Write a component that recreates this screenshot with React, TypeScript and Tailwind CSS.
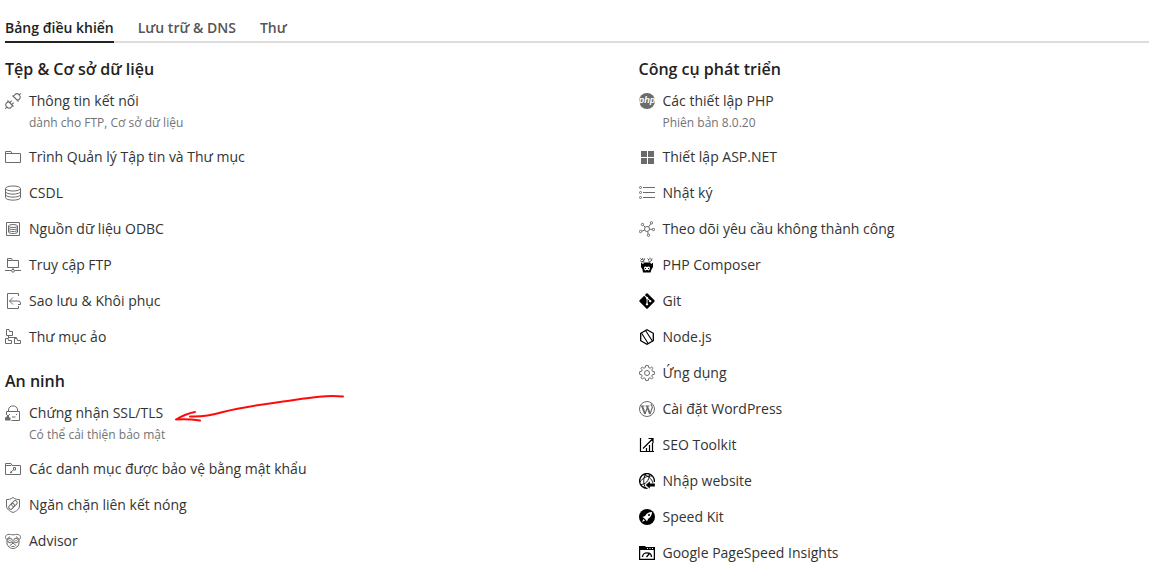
import type { ReactNode } from 'react';
import { FaGitAlt } from 'react-icons/fa';

function Svg({ children, dark = false }: { children: ReactNode; dark?: boolean }) {
  return (
    <svg
      viewBox="0 0 16 16"
      aria-hidden="true"
      fill="none"
      stroke="currentColor"
      strokeWidth="1"
      className={dark ? 'size-4 text-black' : 'size-4 text-[#6b6b6b]'}
    >
      {children}
    </svg>
  );
}

const icons = {
  plug: (
    <Svg>
      <g strokeWidth="1.1">
        <path d="M7.500 2.500 13.500 8.500M8.500 3.500 10 1.500Q12-.3 14 1.800Q16.300 4 14.500 6L12.500 7.500M14.200 1.800 15.700.3" />
        <path d="M2.500 7.500 8.500 13.500M3.500 8.500 1.500 10Q-.3 12 1.800 14Q4 16.300 6 14.500L7.500 12.500M1.800 14.200.3 15.700" />
        <path d="M4.700 9.700 6.700 7.700M6.700 11.700 8.700 9.700" />
      </g>
    </Svg>
  ),
  folder: (
    <Svg>
      <path d="M.5 2.500H6L7 4.500H15.500V13.500H.5ZM.5 4.500H7" />
    </Svg>
  ),
  database: (
    <Svg>
      <ellipse cx="8" cy="3.500" rx="7.500" ry="2.500" />
      <path d="M.5 3.500V12.500C.5 16 15.500 16 15.500 12.500V3.500M.5 6.500C.5 10 15.500 10 15.500 6.500M.5 9.500C.5 13 15.500 13 15.500 9.500" />
    </Svg>
  ),
  odbc: (
    <Svg>
      <path d="M1.500 1.500H14.500V14.500H1.500Z" />
      <ellipse cx="8" cy="5" rx="4.500" ry="1.500" />
      <path d="M3.500 5V11C3.500 13 12.500 13 12.500 11V5M3.500 7C3.500 9 12.500 9 12.500 7M3.500 9C3.500 11 12.500 11 12.500 9" />
    </Svg>
  ),
  ftp: (
    <Svg>
      <path d="M2.500 1.500H6.500L7.500 3.500H13.500V10.500H2.500ZM2.500 3.500H7M8 10.500V13M0 13.500H6.500M9.500 13.500H16" />
      <circle cx="8" cy="13.800" r="1.400" />
    </Svg>
  ),
  backup: (
    <Svg>
      <path d="M13.500 3V.5H2.500V15.500H13.500V13M8 4.500 4.500 8 8 11.500M4.500 8H13Q15.500 8 15.500 10V11.500H13" />
    </Svg>
  ),
  virtual: (
    <Svg>
      <path d="M1.500.5H4L4.500 2.500H7.500V6.500H1.500ZM.5 9.500H3L3.500 11.500H6.500V14.500H.5ZM9.500 9.500H12L12.500 11.500H15.500V14.500H9.500ZM3.500 7V9.500M3.500 8.500H11.500V9.500" />
    </Svg>
  ),
  ssl: (
    <Svg>
      <path d="M3.500 7V5C3.500-.5 12.500-.5 12.500 5V7M1.500 10V6.500H14.500V15.500H6.500M4.500 9V10M11.500 9V10M7 12H10.500" />
      <path d="M0 13.500Q0 11.500 2 11.500V10H4V12L5.500 13V15.500H0Z" fill="currentColor" stroke="none" />
    </Svg>
  ),
  keyFolder: (
    <Svg>
      <path d="M.5 2.500H6L7 4.500H15.500V13.500H.5ZM.5 4.500H6" />
      <path d="M8.500 6.500H10.500V9H8.500ZM8.500 8.700 5 12M5.500 10.800 7 12" />
    </Svg>
  ),
  shield: (
    <Svg>
      <path d="M8 .5C5.500 2.500 3.500 2.500 1.500 2.500V9C1.500 12 4.500 14.200 8 15.500C11.500 14.200 14.500 12 14.500 9V2.500C12.500 2.500 10.500 2.500 8 .5Z" />
      <rect x="-3.200" y="-2" width="6.400" height="4" rx="2" transform="translate(6.600 9.300) rotate(-45)" />
      <rect x="-3.200" y="-2" width="6.400" height="4" rx="2" transform="translate(9.400 6.500) rotate(-45)" />
    </Svg>
  ),
  advisor: (
    <Svg>
      <path d="M1.500 6.500C-.3 4.500.5 1.800 3 1.500C5 1 5.500 1.800 8 1.800S11 1 13 1.500C15.500 1.800 16.300 4.500 14.500 6.500M1.500 6.500 5 3.500M14.500 6.500 11 3.500M2 6.500V10C2 13 5 15.500 8 15.500S14 13 14 10V6.500M4.500 13 8 10 11.500 13M6.500 13.500H9.500" />
      <circle cx="5" cy="7.500" r="2.300" />
      <circle cx="11" cy="7.500" r="2.300" />
      <path d="M4.500 7.500H5.500M10.500 7.500H11.500M7 10H9" strokeWidth="1.300" />
    </Svg>
  ),
  php: (
    <Svg>
      <circle cx="8" cy="8" r="8" fill="currentColor" stroke="none" />
      <text
        x="8"
        y="10"
        textAnchor="middle"
        fill="white"
        stroke="none"
        className="font-['Liberation_Sans'] text-[9px] font-bold italic"
      >
        php
      </text>
    </Svg>
  ),
  windows: (
    <Svg>
      <path d="M2 2H8V8H2ZM9 2H15V8H9ZM2 9H8V15H2ZM9 9H15V15H9Z" fill="currentColor" stroke="none" />
    </Svg>
  ),
  list: (
    <Svg>
      <path d="M4 2.500H16M4 7.500H16M4 12.500H16" />
      <circle cx="1.500" cy="2.500" r="1" />
      <circle cx="1.500" cy="7.500" r="1" />
      <circle cx="1.500" cy="12.500" r="1" />
    </Svg>
  ),
  trace: (
    <Svg>
      <circle cx="8" cy="8" r="2.500" />
      <circle cx="12.500" cy="1.800" r="1.200" />
      <circle cx="3.500" cy="3.500" r="1.200" />
      <circle cx="1.500" cy="10.500" r="1.200" />
      <circle cx="14.500" cy="8.500" r="1.200" />
      <circle cx="9.500" cy="14.200" r="1.200" />
      <path d="M9.500 6 11.800 2.800M4.400 4.400 6.200 6.200M5.700 9 2.700 10.200M10.500 8.200 13.300 8.400M8.600 10.500 9.200 13" />
    </Svg>
  ),
  composer: (
    <Svg dark>
      <path
        d="M2 5.500 4 7 5.500 5.500H11L12.500 7 14 5.500V10L12.500 12.500 11.500 15.500H4L3.500 12.500 2 10Z"
        fill="currentColor"
        stroke="none"
      />
      <path d="M5 10.500Q6 9 8 10Q10 9 11 10.500L10.500 13 8 14 5.500 13Z" fill="white" stroke="none" />
      <path d="M6 11.500H7M9 11.500H10M7 13.500H9" />
      <path d="M1.500 1.500 3 3M3.500 1 4 3M5.500 1.500 5 3.500 2.500 5 1.500 3.500M8.500 1.500 10 3M11 .7V2.500M13 1.500 12.500 3.500 10.500 5 9.500 3.500M3.500 5H5.500" strokeWidth=".7" />
    </Svg>
  ),
  git: <FaGitAlt aria-hidden="true" className="size-4 scale-110 text-black" />,
  node: (
    <Svg dark>
      <path d="M8 .7 14.300 4.300V11.700L8 15.300 1.700 11.700V4.300Z" strokeWidth="1.300" />
      <path d="M2.500 4 9.300 14.700M6.500 1.500 13.500 12.300" strokeWidth="1.100" />
    </Svg>
  ),
  gear: (
    <Svg>
      <path d="M6.700.6H9.300L9.700 2.600 11.100 3.200 12.700 2 14 3.300 12.800 4.900 13.400 6.300 15.400 6.700V9.300L13.400 9.700 12.800 11.100 14 12.700 12.700 14 11.100 12.800 9.700 13.400 9.300 15.400H6.700L6.300 13.400 4.900 12.800 3.300 14 2 12.700 3.200 11.100 2.600 9.700.6 9.300V6.700L2.600 6.300 3.200 4.900 2 3.300 3.300 2 4.900 3.200 6.300 2.600Z" strokeLinejoin="round" />
      <circle cx="8" cy="8" r="2.500" />
    </Svg>
  ),
  wordpress: (
    <Svg>
      <circle cx="8" cy="8" r="7.500" />
      <path d="M1.700 5H5.500M6.500 5H10.500" />
      <path d="M3 5 6 13M8 5 11 13" strokeWidth="1.900" />
      <path d="M6 13 8.300 6.800M11 13 13.300 6.500Q13.500 5.500 12.500 4.500Q11.500 3 13 2.800" strokeWidth="1.100" />
    </Svg>
  ),
  seo: (
    <Svg dark>
      <path d="M1.500 1V14.500H15M4 11.500 13.500 2M9.500 1.500H14V6M7.500 11V14M10.500 8V14M13.500 6V14" strokeWidth="1.200" />
    </Svg>
  ),
  importSite: (
    <Svg dark>
      <path d="M15.300 9A7.400 7.400 0 1 0 8.500 15.300" strokeWidth="1.300" />
      <path d="M4.500 1.800C9 2.500 12.500 5.500 14 10M1 9C4 4.500 8 2.800 13 3M7 .8C4 5 4 10 6.500 15M1.500 11.500C6.500 11.500 10 8 10.500 1.500" strokeWidth=".9" />
      <path d="M6.500 12 11 8V10.300H16V13.700H11V16Z" fill="currentColor" stroke="white" strokeWidth=".4" />
    </Svg>
  ),
  rocket: (
    <Svg dark>
      <circle cx="8" cy="8" r="8" fill="currentColor" stroke="none" />
      <path d="M13 3C10 3 7.500 4.500 6 7L3.500 8 5 9 7 11 8 12.500 9 10C11.500 8.500 13 6 13 3ZM4.500 10 3 13 6 11.500Z" fill="white" stroke="none" />
      <circle cx="10" cy="6" r="1" fill="currentColor" stroke="none" />
    </Svg>
  ),
  pagespeed: (
    <Svg dark>
      <path d="M0 1H6L7 2H16V5H0Z" fill="currentColor" stroke="none" />
      <path d="M.6 3V14.400H15.400V3M3.500 12C3.500 6.500 12.500 6.500 12.500 12M7.500 12 10.500 8.500" strokeWidth="1.300" />
      <path d="M8 3.500H9M10.500 3.500H11.500M13 3.500H14" stroke="white" />
    </Svg>
  ),
};

type Item = { icon: ReactNode; label: string; note?: string; mark?: boolean };

const files: Item[] = [
  { icon: icons.plug, label: 'Thông tin kết nối', note: 'dành cho FTP, Cơ sở dữ liệu' },
  { icon: icons.folder, label: 'Trình Quản lý Tập tin và Thư mục' },
  { icon: icons.database, label: 'CSDL' },
  { icon: icons.odbc, label: 'Nguồn dữ liệu ODBC' },
  { icon: icons.ftp, label: 'Truy cập FTP' },
  { icon: icons.backup, label: 'Sao lưu & Khôi phục' },
  { icon: icons.virtual, label: 'Thư mục ảo' },
];

const security: Item[] = [
  { icon: icons.ssl, label: 'Chứng nhận SSL/TLS', note: 'Có thể cải thiện bảo mật', mark: true },
  { icon: icons.keyFolder, label: 'Các danh mục được bảo vệ bằng mật khẩu' },
  { icon: icons.shield, label: 'Ngăn chặn liên kết nóng' },
  { icon: icons.advisor, label: 'Advisor' },
];

const devTools: Item[] = [
  { icon: icons.php, label: 'Các thiết lập PHP', note: 'Phiên bản 8.0.20' },
  { icon: icons.windows, label: 'Thiết lập ASP.NET' },
  { icon: icons.list, label: 'Nhật ký' },
  { icon: icons.trace, label: 'Theo dõi yêu cầu không thành công' },
  { icon: icons.composer, label: 'PHP Composer' },
  { icon: icons.git, label: 'Git' },
  { icon: icons.node, label: 'Node.js' },
  { icon: icons.gear, label: 'Ứng dụng' },
  { icon: icons.wordpress, label: 'Cài đặt WordPress' },
  { icon: icons.seo, label: 'SEO Toolkit' },
  { icon: icons.importSite, label: 'Nhập website' },
  { icon: icons.rocket, label: 'Speed Kit' },
  { icon: icons.pagespeed, label: 'Google PageSpeed Insights' },
];

function Arrow() {
  return (
    <svg
      viewBox="0 0 172 30"
      aria-hidden="true"
      fill="none"
      stroke="#ff0a0a"
      strokeWidth="2"
      strokeLinecap="round"
      strokeLinejoin="round"
      className="pointer-events-none absolute -top-2.5 left-full ml-2.5 h-[30px] w-[172px]"
    >
      <path d="M170 3.500C150 2 135 5 110 8.500C85 12 70 14 50 19C36 23 26 24 17 23.500M22 19C14 20.500 8 23.500 3 26.500C12 26 20 26.500 27 27.500" />
    </svg>
  );
}

function Section({ title, items }: { title: string; items: Item[] }) {
  return (
    <section>
      <h2 className="text-base leading-6 font-semibold text-[#222]">{title}</h2>
      <ul className="mt-2.5 flex flex-col gap-4">
        {items.map((item) => (
          <li key={item.label} className="flex items-start gap-2">
            <span className="flex h-5 w-4 shrink-0 items-center">{item.icon}</span>
            <div>
              <a href="#" className="relative block w-fit text-sm leading-5 text-[#333]">
                {item.label}
                {item.mark && <Arrow />}
              </a>
              {item.note && <p className="pt-1 text-xs leading-4 text-[#737373]">{item.note}</p>}
            </div>
          </li>
        ))}
      </ul>
    </section>
  );
}

export default function App() {
  return (
    <main className="bg-white pl-[5px] font-['Open_Sans','Noto_Sans',sans-serif]">
      <nav className="flex gap-6 border-b-2 border-[#ddd] pt-4 text-sm leading-6 font-semibold">
        <a href="#" aria-current="page" className="-mb-0.5 border-b-2 border-[#222] pb-px text-[#222]">
          Bảng điều khiển
        </a>
        <a href="#" className="text-[#555]">Lưu trữ &amp; DNS</a>
        <a href="#" className="text-[#555]">Thư</a>
      </nav>
      <div className="grid grid-cols-2 gap-[123px] pt-3.5">
        <div className="flex flex-col gap-[22px]">
          <Section title="Tệp & Cơ sở dữ liệu" items={files} />
          <Section title="An ninh" items={security} />
        </div>
        <Section title="Công cụ phát triển" items={devTools} />
      </div>
    </main>
  );
}
